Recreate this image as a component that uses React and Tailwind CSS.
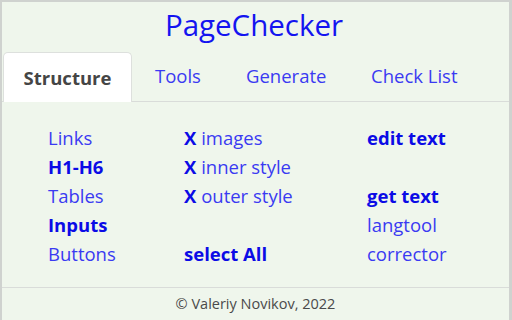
export default function App() {
    const col1 = [
        { t: 'Links', b: false },
        { t: 'H1-H6', b: true },
        { t: 'Tables', b: false },
        { t: 'Inputs', b: true },
        { t: 'Buttons', b: false },
    ];
    const col2 = [
        { x: true, t: 'images' },
        { x: true, t: 'inner style' },
        { x: true, t: 'outer style' },
        null,
        { sel: true, t: 'select All' },
    ];
    const col3 = [
        { t: 'edit text', b: true },
        null,
        { t: 'get text', b: true },
        { t: 'langtool', b: false },
        { t: 'corrector', b: false },
    ];

    return (
        <div
            className="w-[512px] h-[320px] bg-[#eff6ec] border-t-2 border-l-2 border-r-[3px] border-[#cfd2cf] flex flex-col overflow-hidden"
            style={{ fontFamily: '"Open Sans", "Noto Sans", sans-serif' }}
        >
            <h1 className="text-center text-[29.5px] leading-[36px] mt-[5px] text-[#1414f0] pr-[3px]">PageChecker</h1>
            <div className="flex mt-[9px] border-b border-[#d9dcd9] h-[50px] items-end text-[18.5px]">
                <div className="h-[50px] ml-[1px] w-[129px] bg-white rounded-t-[5px] border border-b-0 border-[#dde0dd] flex items-center justify-center font-bold text-[#454545] -mb-px">
                    Structure
                </div>
                <div className="h-[50px] w-[114px] pl-[23px] flex items-center text-[#3a3af2]">Tools</div>
                <div className="h-[50px] w-[125px] flex items-center text-[#3a3af2]">Generate</div>
                <div className="h-[50px] flex items-center text-[#3a3af2]">Check List</div>
            </div>
            <div className="flex pt-[21px] h-[185px] text-[18.5px]">
                <div className="w-[182px] pl-[46px] flex flex-col">
                    {col1.map((r) => (
                        <div key={r.t} className={`h-[29px] leading-[29px] ${r.b ? 'font-bold text-[#0b0be6]' : 'text-[#3a3af2]'}`}>{r.t}</div>
                    ))}
                </div>
                <div className="w-[183px] flex flex-col">
                    {col2.map((r, i) => (
                        <div key={i} className="h-[29px] leading-[29px]">
                            {r && r.x && (
                                <>
                                    <span className="font-bold text-[#0b0be6]">X</span>{' '}
                                    <span className="text-[#3a3af2]">{r.t}</span>
                                </>
                            )}
                            {r && r.sel && <span className="font-bold text-[#0b0be6]">{r.t}</span>}
                        </div>
                    ))}
                </div>
                <div className="flex flex-col">
                    {col3.map((r, i) => (
                        <div key={i} className={`h-[29px] leading-[29px] ${r && r.b ? 'font-bold text-[#0b0be6]' : 'text-[#3a3af2]'}`}>{r ? r.t : ''}</div>
                    ))}
                </div>
            </div>
            <div className="border-t border-[#d9dcd9] flex-1 flex items-center justify-center text-[14.5px] text-[#4a4a4a]">
                © Valeriy Novikov, 2022
            </div>
        </div>
    );
}
